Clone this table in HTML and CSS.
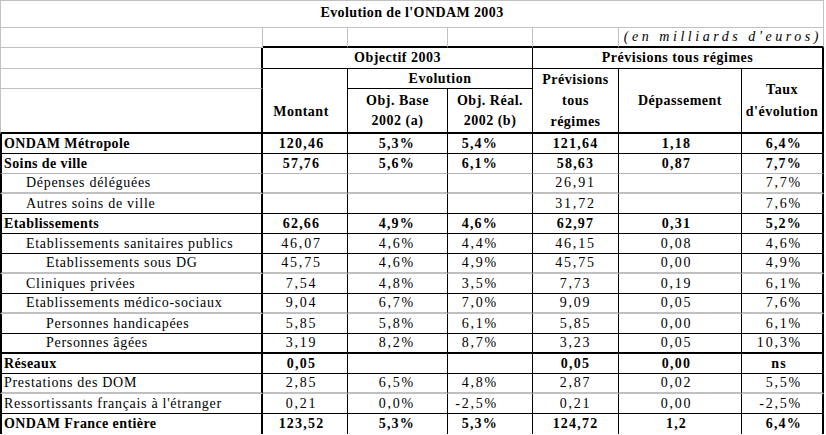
FILE: index.html
```html
<!DOCTYPE html>
<html lang="fr">
<head>
<meta charset="utf-8">
<title>Evolution de l'ONDAM 2003</title>
<link rel="stylesheet" href="styles.css">
</head>
<body>
<table class="sheet">
  <colgroup>
    <col class="w-label"><col class="w-montant"><col class="w-base"><col class="w-real"><col class="w-prev"><col class="w-dep"><col class="w-taux">
  </colgroup>
  <tr class="h-title">
    <td colspan="7" class="title">Evolution de l'ONDAM 2003</td>
  </tr>
  <tr class="h-unit">
    <td class="hl gr"></td>
    <td class="gr kb2"></td>
    <td class="gr kb2"></td>
    <td class="gr kb2"></td>
    <td class="gr kb2"></td>
    <td colspan="2" class="gr kb2 unit">(en milliards d'euros)</td>
  </tr>
  <tr class="h-group">
    <td class="hl kr2"></td>
    <td colspan="3" class="hd">Objectif 2003</td>
    <td colspan="3" class="hd kr2">Prévisions tous régimes</td>
  </tr>
  <tr class="h-sub">
    <td class="hl kr2"></td>
    <td rowspan="2" class="hd kb2 montant-h">Montant</td>
    <td colspan="2" class="hd">Evolution</td>
    <td rowspan="2" class="hd kb2 multi3">Prévisions<br>tous<br>régimes</td>
    <td rowspan="2" class="hd kb2">Dépassement</td>
    <td rowspan="2" class="hd kb2 kr2 multi2">Taux<br>d'évolution</td>
  </tr>
  <tr class="h-cols">
    <td class="hl kr2 kb2"></td>
    <td class="hd kb2 multi">Obj. Base<br>2002 (a)</td>
    <td class="hd kb2 multi">Obj. Réal.<br>2002 (b)</td>
  </tr>

  <tr class="row bold">
    <td class="lab">ONDAM Métropole</td>
    <td class="num mt">120,46</td><td class="num ob">5,3%</td><td class="num orr">5,4%</td>
    <td class="num pv">121,64</td><td class="num dp">1,18</td><td class="num tx">6,4%</td>
  </tr>
  <tr class="row bold sep-light">
    <td class="lab">Soins de ville</td>
    <td class="num mt">57,76</td><td class="num ob">5,6%</td><td class="num orr">6,1%</td>
    <td class="num pv">58,63</td><td class="num dp">0,87</td><td class="num tx">7,7%</td>
  </tr>
  <tr class="row sep-grey">
    <td class="lab ind1">Dépenses déléguées</td>
    <td class="num mt"></td><td class="num ob"></td><td class="num orr"></td>
    <td class="num pv">26,91</td><td class="num dp"></td><td class="num tx">7,7%</td>
  </tr>
  <tr class="row">
    <td class="lab ind1">Autres soins de ville</td>
    <td class="num mt"></td><td class="num ob"></td><td class="num orr"></td>
    <td class="num pv">31,72</td><td class="num dp"></td><td class="num tx">7,6%</td>
  </tr>
  <tr class="row bold">
    <td class="lab">Etablissements</td>
    <td class="num mt">62,66</td><td class="num ob">4,9%</td><td class="num orr">4,6%</td>
    <td class="num pv">62,97</td><td class="num dp">0,31</td><td class="num tx">5,2%</td>
  </tr>
  <tr class="row">
    <td class="lab ind1">Etablissements sanitaires publics</td>
    <td class="num mt">46,07</td><td class="num ob">4,6%</td><td class="num orr">4,4%</td>
    <td class="num pv">46,15</td><td class="num dp">0,08</td><td class="num tx">4,6%</td>
  </tr>
  <tr class="row sep-grey">
    <td class="lab ind2">Etablissements sous DG</td>
    <td class="num mt">45,75</td><td class="num ob">4,6%</td><td class="num orr">4,9%</td>
    <td class="num pv">45,75</td><td class="num dp">0,00</td><td class="num tx">4,9%</td>
  </tr>
  <tr class="row">
    <td class="lab ind1">Cliniques privées</td>
    <td class="num mt">7,54</td><td class="num ob">4,8%</td><td class="num orr">3,5%</td>
    <td class="num pv">7,73</td><td class="num dp">0,19</td><td class="num tx">6,1%</td>
  </tr>
  <tr class="row sep-grey">
    <td class="lab ind1">Etablissements médico-sociaux</td>
    <td class="num mt">9,04</td><td class="num ob">6,7%</td><td class="num orr">7,0%</td>
    <td class="num pv">9,09</td><td class="num dp">0,05</td><td class="num tx">7,6%</td>
  </tr>
  <tr class="row">
    <td class="lab ind2">Personnes handicapées</td>
    <td class="num mt">5,85</td><td class="num ob">5,8%</td><td class="num orr">6,1%</td>
    <td class="num pv">5,85</td><td class="num dp">0,00</td><td class="num tx">6,1%</td>
  </tr>
  <tr class="row sep-thick">
    <td class="lab ind2">Personnes âgées</td>
    <td class="num mt">3,19</td><td class="num ob">8,2%</td><td class="num orr">8,7%</td>
    <td class="num pv">3,23</td><td class="num dp">0,05</td><td class="num tx">10,3%</td>
  </tr>
  <tr class="row bold">
    <td class="lab">Réseaux</td>
    <td class="num mt">0,05</td><td class="num ob"></td><td class="num orr"></td>
    <td class="num pv">0,05</td><td class="num dp">0,00</td><td class="num tx ns">ns</td>
  </tr>
  <tr class="row sep-grey">
    <td class="lab">Prestations des DOM</td>
    <td class="num mt">2,85</td><td class="num ob">6,5%</td><td class="num orr">4,8%</td>
    <td class="num pv">2,87</td><td class="num dp">0,02</td><td class="num tx">5,5%</td>
  </tr>
  <tr class="row">
    <td class="lab">Ressortissants français à l'étranger</td>
    <td class="num mt">0,21</td><td class="num ob">0,0%</td><td class="num orr">-2,5%</td>
    <td class="num pv">0,21</td><td class="num dp">0,00</td><td class="num tx">-2,5%</td>
  </tr>
  <tr class="row bold last">
    <td class="lab">ONDAM France entière</td>
    <td class="num mt">123,52</td><td class="num ob">5,3%</td><td class="num orr">5,3%</td>
    <td class="num pv">124,72</td><td class="num dp">1,2</td><td class="num tx">6,4%</td>
  </tr>
</table>
</body>
</html>
```

FILE: styles.css
```css
html, body {
  margin: 0;
  padding: 0;
  background: #ffffff;
}

body {
  font-family: "Liberation Serif", "DejaVu Serif", serif;
  font-size: 14px;
  color: #000;
  overflow: hidden;
}

.sheet {
  border-collapse: separate;
  border-spacing: 0;
  table-layout: fixed;
  width: 824px;
  font-family: "Liberation Serif", "DejaVu Serif", serif;
}

.w-label { width: 263px; }
.w-montant { width: 85px; }
.w-base { width: 100px; }
.w-real { width: 85px; }
.w-prev { width: 86px; }
.w-dep { width: 123px; }
.w-taux { width: 82px; }

.sheet td {
  padding: 0;
  border: 0 solid #000;
  border-right-width: 1px;
  border-bottom-width: 1px;
  white-space: nowrap;
  overflow: visible;
  vertical-align: middle;
  line-height: 16px;
}

/* header rows */
.h-title { height: 28px; }
.h-unit { height: 20px; }
.h-group { height: 21px; }
.h-sub { height: 20px; }
.h-cols { height: 45px; }

.sheet td.title {
  text-align: center;
  font-weight: bold;
  letter-spacing: 0.4px;
  border-top: 1px solid #c0c0c0;
  border-left: 1px solid #c0c0c0;
  border-right-color: #c0c0c0;
  border-bottom-color: #c0c0c0;
  padding-bottom: 2px;
}

.sheet td.hl {
  border-left: 1px solid #c0c0c0;
  border-bottom-color: #c0c0c0;
  border-right-color: #c0c0c0;
}

.sheet td.gr { border-right-color: #c0c0c0; }
.sheet td.kb2 { border-bottom-width: 2px; border-bottom-color: #000; }
.sheet td.kr2 { border-right-width: 2px; border-right-color: #000; }

.sheet td.unit {
  text-align: right;
  font-style: italic;
  letter-spacing: 3.55px;
  padding-right: 1px;
}

.sheet td.hd {
  text-align: center;
  font-weight: bold;
  letter-spacing: 0.5px;
}

.sheet td.multi { line-height: 20px; padding-top: 1px; }
.sheet td.multi2 { line-height: 22px; }
.sheet td.multi3 { line-height: 21px; }
.sheet td.montant-h { padding-right: 8px; padding-top: 22px; }

/* data rows */
.row { height: 20px; }
.row.bold td { font-weight: bold; }

.sheet .row td.lab {
  border-left: 2px solid #000;
  border-right-width: 2px;
  padding-left: 2px;
  letter-spacing: 0.7px;
}
.sheet .row.bold td.lab { letter-spacing: 0.4px; }

.sheet .row td.ind1 { padding-left: 24px; }
.sheet .row td.ind2 { padding-left: 44px; }

.sheet .row td:last-child { border-right-width: 2px; }

.sheet .row td.num { letter-spacing: 1.8px; }
.sheet .row.bold td.num { letter-spacing: 1.2px; }

.sheet .row td.mt { text-align: center; padding-right: 7px; }
.sheet .row td.ob { text-align: right; padding-right: 32px; }
.sheet .row td.orr { text-align: right; padding-right: 34px; }
.sheet .row td.pv { text-align: center; }
.sheet .row td.dp { text-align: center; padding-right: 7px; }
.sheet .row td.tx { text-align: right; padding-right: 20px; }
.sheet .row td.ns { text-align: center; padding-right: 6px; }

.sheet .row.sep-light td { border-bottom-color: #b4b4b4; }
.sheet .row.sep-grey td { border-bottom-width: 2px; border-bottom-color: #c0c0c0; }
.sheet .row.sep-thick td { border-bottom-width: 2px; }
.sheet .row.last td { border-bottom-width: 0; }
```
